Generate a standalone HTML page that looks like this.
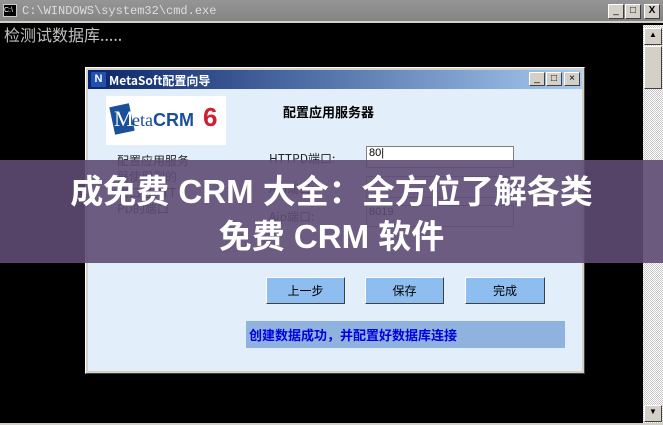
<!DOCTYPE html>
<html><head><meta charset="utf-8"><style>
*{margin:0;padding:0;box-sizing:border-box}
body{width:663px;height:425px;overflow:hidden;background:#000;position:relative;font-family:"Liberation Sans","Noto Sans CJK SC",sans-serif}
.a{position:absolute}
.btn3{background:#d4d0c8;border:1px solid;border-color:#fff #404040 #404040 #fff;font-size:10px;line-height:11px;text-align:center;color:#000}
.cn{font-family:"SimSun","WenQuanYi Zen Hei","Noto Sans CJK SC",sans-serif}
</style></head><body>
<div class="a" style="left:0;top:0;width:663px;height:23px;background:linear-gradient(#959595,#858585);border-bottom:2px solid #d4d0c8"></div>
<div class="a" style="left:3px;top:4px;width:14px;height:13px;background:#000;border:1px solid #ccc;color:#fff;font-size:7px;line-height:11px">C:\</div>
<div class="a" style="left:22px;top:4px;color:#ddd;font:12px 'Liberation Mono',monospace">C:\WINDOWS\system32\cmd.exe</div>
<div class="a btn3" style="left:608px;top:4px;width:16px;height:15px">_</div>
<div class="a btn3" style="left:625px;top:4px;width:16px;height:15px">□</div>
<div class="a btn3" style="left:644px;top:4px;width:16px;height:15px;font-weight:bold">X</div>
<div class="a cn" style="left:4px;top:22px;color:#c0c0c0;font-size:16px">检测试数据库.....</div>
<div class="a" style="left:643px;top:25px;width:20px;height:400px;background:repeating-conic-gradient(#fff 0 25%,#c8c8c8 0 50%) 0 0/2px 2px"></div>
<div class="a btn3" style="left:644px;top:28px;width:18px;height:17px;font-size:8px">▲</div>
<div class="a btn3" style="left:644px;top:46px;width:18px;height:43px"></div>
<div class="a btn3" style="left:644px;top:405px;width:18px;height:17px;font-size:8px">▼</div>
<div class="a" style="left:0;top:423px;width:663px;height:2px;background:#d4d0c8"></div>
<div class="a" style="left:85px;top:67px;width:500px;height:307px;background:#d4d0c8;border:1px solid;border-color:#fff #404040 #404040 #fff"></div>
<div class="a" style="left:88px;top:70px;width:494px;height:19px;background:linear-gradient(90deg,#0a246a,#a6caf0)"></div>
<div class="a" style="left:91px;top:72px;width:15px;height:15px;background:#2050b0;color:#fff;font-size:11px;font-weight:bold;text-align:center;line-height:15px">N</div>
<div class="a cn" style="left:109px;top:72px;color:#fff;font-size:12px;font-weight:bold">MetaSoft配置向导</div>
<div class="a btn3" style="left:529px;top:72px;width:16px;height:14px">_</div>
<div class="a btn3" style="left:546px;top:72px;width:16px;height:14px">□</div>
<div class="a btn3" style="left:564px;top:72px;width:16px;height:14px">×</div>
<div class="a" style="left:88px;top:89px;width:494px;height:282px;background:#e2eefa"></div>
<div class="a" style="left:106px;top:96px;width:120px;height:49px;background:#fff"></div>
<div class="a" style="left:112px;top:105px;width:20px;height:28px;background:#1a4f9a;transform:rotate(-12deg)"></div>
<div class="a" style="left:114px;top:106px;color:#fff;font:22px 'Liberation Serif',serif">M</div>
<div class="a" style="left:132px;top:110px;color:#1a4f9a;font:18px 'Liberation Serif',serif">eta<b style="font-family:'Liberation Sans'">CRM</b></div>
<div class="a" style="left:203px;top:102px;color:#d02030;font:bold 26px 'Liberation Sans',sans-serif">6</div>
<div class="a cn" style="left:283px;top:102px;font-size:13px;font-weight:bold">配置应用服务器</div>
<div class="a cn" style="left:117px;top:153px;font-size:12px;color:#222;line-height:16px">配置应用服务<br>器使用到的<br>端口号HTT<br>PD的端口</div>
<div class="a cn" style="left:269px;top:150px;font-size:12px;color:#222">HTTPD端口:</div>
<div class="a cn" style="left:269px;top:180px;font-size:12px;color:#222">Ajp端口:</div>
<div class="a cn" style="left:269px;top:208px;font-size:12px;color:#222">Ajp端口:</div>
<div class="a" style="left:366px;top:146px;width:148px;height:22px;background:#fff;border:1px solid #808080;font-size:11px;padding-left:2px">80|</div>
<div class="a" style="left:366px;top:176px;width:148px;height:22px;background:#e2eefa;border:1px solid #808080"></div>
<div class="a" style="left:366px;top:205px;width:148px;height:22px;background:#e2eefa;border:1px solid #808080;font-size:11px;padding-left:2px">8019</div>
<div class="a btn3 cn" style="left:266px;top:277px;width:79px;height:27px;background:#8ebdf0;line-height:25px;font-size:12px">上一步</div>
<div class="a btn3 cn" style="left:365px;top:277px;width:79px;height:27px;background:#8ebdf0;line-height:25px;font-size:12px">保存</div>
<div class="a btn3 cn" style="left:465px;top:277px;width:80px;height:27px;background:#8ebdf0;line-height:25px;font-size:12px">完成</div>
<div class="a cn" style="left:246px;top:321px;width:319px;height:27px;background:#8fb2de;color:#0000e0;font-size:13px;font-weight:bold;line-height:27px;padding-left:3px">创建数据成功，并配置好数据库连接</div>
<div class="a" style="left:0;top:160px;width:663px;height:103px;background:rgba(95,75,115,0.9)"></div>
<div class="a" style="left:0;top:169px;width:663px;text-align:center;color:#fff;font-weight:bold;font-size:33px;line-height:45px;font-family:'Liberation Sans','Noto Sans CJK SC',sans-serif">成免费 CRM 大全：全方位了解各类<br>免费 CRM 软件</div>
</body></html>
